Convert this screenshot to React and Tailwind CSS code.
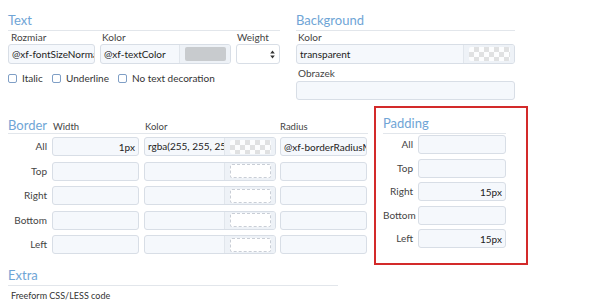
import React from 'react';

const font = { fontFamily: 'Lato, "Open Sans", sans-serif' };

const inputCls =
  'h-full w-full rounded-[3px] border border-[#d8dee6] bg-[#f5f8fc] px-[3px] text-[10px] leading-none text-[#222] flex items-center overflow-hidden whitespace-nowrap';

const Checker = () => (
  <div className="h-[14px] w-[41px] rounded-[2px] bg-[repeating-conic-gradient(#dcdcdc_0_25%,#ffffff_0_50%)] bg-[length:10px_10px] opacity-80" />
);

const Empty = () => (
  <div className="h-[14px] w-[41px] rounded-[2px] border border-dashed border-[#c9ced6] bg-white" />
);

const ColorInput = ({ value, swatch }) => (
  <div className="flex h-full overflow-hidden rounded-[3px] border border-[#d8dee6] bg-[#f5f8fc]">
    <div className="flex min-w-0 flex-1 items-center overflow-hidden whitespace-nowrap px-[3px] text-[10px] text-[#222]">
      {value}
    </div>
    <div className="flex w-[51px] shrink-0 items-center justify-center border-l border-[#e1e6ec] bg-[#eef2f7]">
      {swatch}
    </div>
  </div>
);

const Title = ({ children }) => (
  <span className="text-[13px] leading-[20px] text-[#6fa5d6]">{children}</span>
);

const Label = ({ children, className = '' }) => (
  <div className={`h-[13px] text-[10px] leading-[13px] text-[#444] ${className}`}>{children}</div>
);

const Checkbox = ({ label, className = '' }) => (
  <label className={`flex items-center gap-[5px] text-[10px] text-[#333] ${className}`}>
    <span className="h-[9px] w-[9px] rounded-[2px] border border-[#7f9fc6] bg-white" />
    {label}
  </label>
);

const borderRows = [
  { name: 'All', width: '1px', color: 'rgba(255, 255, 255, 0)', checker: true, radius: '@xf-borderRadiusMedium' },
  { name: 'Top' },
  { name: 'Right' },
  { name: 'Bottom' },
  { name: 'Left' },
];

const paddingRows = [
  { name: 'All' },
  { name: 'Top' },
  { name: 'Right', value: '15px' },
  { name: 'Bottom' },
  { name: 'Left', value: '15px' },
];

export default function App() {
  return (
    <div className="h-[300px] w-[592px] overflow-hidden bg-white" style={font}>
      {/* Text + Background */}
      <div className="flex gap-[16px] pl-[8px] pt-[10px]">
        <div className="w-[272px]">
          <div className="flex h-[21px] items-end border-b border-[#e2e6eb]">
            <Title>Text</Title>
          </div>
          <div className="flex gap-[5px]">
            <div className="w-[87px]">
              <Label className="pl-[3px]">Rozmiar</Label>
              <div className="h-[20px]">
                <div className={inputCls}>@xf-fontSizeNormal</div>
              </div>
            </div>
            <div className="w-[131px]">
              <Label className="pl-[2px]">Kolor</Label>
              <div className="h-[20px]">
                <ColorInput
                  value="@xf-textColor"
                  swatch={<div className="h-[14px] w-[41px] rounded-[2px] bg-[#c8cbce]" />}
                />
              </div>
            </div>
            <div className="w-[44px]">
              <Label className="pl-[1px]">Weight</Label>
              <div className="flex h-[20px] items-center justify-end rounded-[3px] border border-[#d8dee6] bg-white pr-[4px]">
                <svg width="5" height="9" viewBox="0 0 5 9">
                  <path d="M2.5 0.5 L4.8 3.6 H0.2 Z M2.5 8.5 L4.8 5.4 H0.2 Z" fill="#333" />
                </svg>
              </div>
            </div>
          </div>
          <div className="mt-[8px] flex h-[12px] items-center">
            <Checkbox label="Italic" className="w-[44px]" />
            <Checkbox label="Underline" className="w-[66px]" />
            <Checkbox label="No text decoration" />
          </div>
        </div>

        <div className="w-[219px]">
          <div className="flex h-[21px] items-end border-b border-[#e2e6eb]">
            <Title>Background</Title>
          </div>
          <Label className="pl-[2px]">Kolor</Label>
          <div className="h-[20px]">
            <ColorInput value="transparent" swatch={<Checker />} />
          </div>
          <Label className="mt-[3px] h-[14px] pl-[2px]">Obrazek</Label>
          <div className="h-[19px]">
            <div className={inputCls} />
          </div>
        </div>
      </div>

      {/* Border + Padding */}
      <div className="mt-[6px] flex items-start gap-[6px] pl-[8px]">
        <div className="w-[360px]">
          <div className="flex h-[28px] items-baseline border-b border-[#e2e6eb] pt-[6px]">
            <div className="w-[45px]">
              <Title>Border</Title>
            </div>
            <div className="w-[92px] text-[9.5px] text-[#444]">Width</div>
            <div className="w-[135px] text-[9.5px] text-[#444]">Kolor</div>
            <div className="text-[9.5px] text-[#444]">Radius</div>
          </div>
          <div className="mt-[3px] flex flex-col gap-[5.5px]">
            {borderRows.map((r) => (
              <div key={r.name} className="flex h-[19px] items-center">
                <div className="w-[39px] text-right text-[10px] text-[#444]">{r.name}</div>
                <div className="ml-[5px] h-full w-[87px]">
                  <div className={`${inputCls} justify-end`}>{r.width}</div>
                </div>
                <div className="ml-[5px] h-full w-[132px]">
                  <ColorInput value={r.color} swatch={r.checker ? <Checker /> : <Empty />} />
                </div>
                <div className="ml-[4px] h-full w-[87px]">
                  <div className={inputCls}>{r.radius}</div>
                </div>
              </div>
            ))}
          </div>
        </div>

        <div className="h-[159px] w-[154px] border-2 border-[#d32a2a] pl-[7px] pr-[20px]">
          <div className="flex h-[26px] items-end border-b border-[#e2e6eb]">
            <Title>Padding</Title>
          </div>
          <div className="mt-[1px] flex flex-col gap-[4.5px]">
            {paddingRows.map((r) => (
              <div key={r.name} className="flex h-[19px] items-center">
                <div className="w-[30px] text-right text-[10px] text-[#444]">{r.name}</div>
                <div className="ml-[5px] h-full w-[88px]">
                  <div className={`${inputCls} justify-end`}>{r.value}</div>
                </div>
              </div>
            ))}
          </div>
        </div>
      </div>

      {/* Extra */}
      <div className="w-[330px] pl-[8px]">
        <div className="flex h-[21px] w-[330px] items-end border-b border-[#e2e6eb]">
          <Title>Extra</Title>
        </div>
        <div className="pl-[3px] pt-[3px] text-[9px] leading-[13px] text-[#333]">
          Freeform CSS/LESS code
        </div>
      </div>
    </div>
  );
}
